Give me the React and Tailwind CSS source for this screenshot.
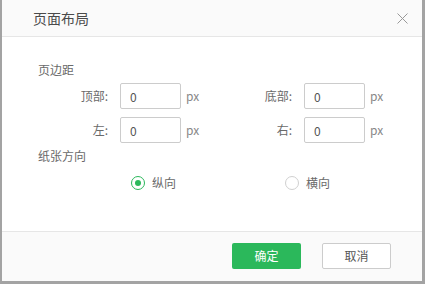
import { useState } from 'react';

const font = { fontFamily: '"Noto Sans CJK SC", "Noto Sans", sans-serif' };

function Field({ label, value }) {
  return (
    <div className="flex items-center">
      <span className="w-[72px] text-right pr-[2px]">{label}</span>
      <input
        className="ml-[10px] w-[61px] h-[26px] border border-[#cccccc] rounded-[2px] px-[9px] text-[12px] text-[#555] outline-none"
        defaultValue={value}
      />
      <span className="ml-[5px] text-[#888]">px</span>
    </div>
  );
}

function Radio({ checked, label, onClick }) {
  return (
    <button className="flex items-center gap-[7px]" onClick={onClick}>
      <span
        className={
          'w-[14px] h-[14px] rounded-full border flex items-center justify-center bg-white ' +
          (checked ? 'border-[#2bb85b]' : 'border-[#d0d0d0]')
        }
      >
        {checked && <span className="w-[6px] h-[6px] rounded-full bg-[#2bb85b]" />}
      </span>
      <span>{label}</span>
    </button>
  );
}

function App() {
  const [orient, setOrient] = useState('portrait');

  return (
    <div className="w-[425px] h-[284px] bg-[#a3a3a3] pl-[2px] pr-[3px] pb-[3px]" style={font}>
      <div className="w-[420px] h-[281px] bg-white flex flex-col text-[12px] text-[#6a6a6a]">
        <div className="h-[37px] bg-[#fafafa] border-b border-[#e6e6e6] flex items-center justify-between pl-[31px] pr-[14px]">
          <span className="text-[14px] text-[#4a4a4a]">页面布局</span>
          <svg width="11" height="11" viewBox="0 0 11 11" className="text-[#999]">
            <path d="M0.5 0.5L10.5 10.5M10.5 0.5L0.5 10.5" stroke="currentColor" strokeWidth="1" />
          </svg>
        </div>

        <div className="h-[194px] pl-[36px] pt-[23px]">
          <div className="h-5 leading-5">页边距</div>
          <div className="mt-[3px] flex flex-col gap-2">
            <div className="grid grid-cols-[184px_184px]">
              <Field label="顶部:" value="0" />
              <Field label="底部:" value="0" />
            </div>
            <div className="grid grid-cols-[184px_184px]">
              <Field label="左:" value="0" />
              <Field label="右:" value="0" />
            </div>
          </div>
          <div className="mt-[3px] h-5 leading-5">纸张方向</div>
          <div className="mt-[7px] h-5 flex items-center pl-[93px]">
            <div className="w-[154px]">
              <Radio checked={orient === 'portrait'} label="纵向" onClick={() => setOrient('portrait')} />
            </div>
            <Radio checked={orient === 'landscape'} label="横向" onClick={() => setOrient('landscape')} />
          </div>
        </div>

        <div className="flex-1 bg-[#fafafa] border-t border-[#e6e6e6] flex justify-end items-start pt-[11px] pr-[31px] gap-[21px]">
          <button className="w-[69px] h-[26px] rounded-[2px] bg-[#2bb85b] text-white text-[12px]">确定</button>
          <button className="w-[69px] h-[26px] rounded-[2px] bg-white border border-[#cccccc] text-[#555] text-[12px]">取消</button>
        </div>
      </div>
    </div>
  );
}

export default App;
